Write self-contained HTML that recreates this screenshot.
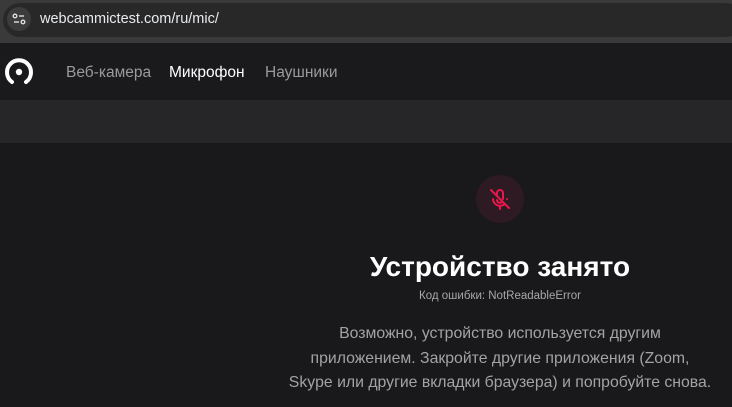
<!DOCTYPE html>
<html><head><meta charset="utf-8"><style>
*{margin:0;padding:0;box-sizing:border-box}
body{width:732px;height:407px;overflow:hidden;background:#19191b;font-family:"Liberation Sans",sans-serif;position:relative}
.top{position:absolute;left:0;top:0;width:732px;height:43px;background:#3a3a3a}
.pill{position:absolute;left:3px;top:3px;width:740px;height:34px;border-radius:17px;background:#282828}
.ic{position:absolute;left:7px;top:7px;width:24px;height:24px;border-radius:12px;background:#3c3c3c}
.url{position:absolute;left:40px;top:11px;font-size:14.5px;color:#e8eaed}
.nav{position:absolute;left:0;top:43px;width:732px;height:57px;background:#1a1a1c}
.nav span{position:absolute;top:21px;font-size:15.5px;color:#9a9a9a}
.band{position:absolute;left:0;top:100px;width:732px;height:43px;background:#262628}
.circ{position:absolute;left:476px;top:175px;width:48px;height:48px;border-radius:24px;background:#2e1a22}
h1{position:absolute;left:300px;width:400px;top:251px;text-align:center;font-size:28px;color:#fff;font-weight:bold}
.code{position:absolute;left:300px;width:400px;top:290px;text-align:center;font-size:11.5px;color:#a8a8a8}
.p{position:absolute;left:270px;width:460px;top:322px;text-align:center;font-size:15.8px;line-height:24.5px;color:#a3a3a3}
</style></head><body>
<div class="top"><div class="pill"></div><div class="ic">
<svg width="24" height="24" viewBox="0 0 24 24" fill="none" stroke="#e0e0e0" stroke-width="1.4"><circle cx="8" cy="9" r="1.8"/><line x1="12" y1="9" x2="17" y2="9"/><line x1="7" y1="15" x2="12" y2="15"/><circle cx="16" cy="15" r="1.8"/></svg></div>
<div class="url">webcammictest.com/ru/mic/</div></div>
<div class="nav">
<svg style="position:absolute;left:4px;top:14px" width="30" height="30" viewBox="0 0 30 30"><path d="M8 25 A12 12 0 1 1 22 25" fill="none" stroke="#fff" stroke-width="4" stroke-linecap="round"/><circle cx="15" cy="15" r="3.2" fill="#fff"/></svg>
<span style="left:66px">Веб-камера</span><span style="left:169px;color:#fff">Микрофон</span><span style="left:265px">Наушники</span></div>
<div class="band"></div>
<div class="circ"><svg width="48" height="48" viewBox="0 0 48 48" fill="none" stroke="#e8174c" stroke-width="2" stroke-linecap="round"><path d="M21 20v-2a3 3 0 0 1 6 0v6"/><path d="M26 27a3 3 0 0 1-5-2"/><path d="M17 24a7 7 0 0 0 11 5.5M31 24v0"/><line x1="24" y1="31" x2="24" y2="34"/><line x1="15" y1="15" x2="33" y2="33"/></svg></div>
<h1>Устройство занято</h1>
<div class="code">Код ошибки: NotReadableError</div>
<div class="p">Возможно, устройство используется другим<br>приложением. Закройте другие приложения (Zoom,<br>Skype или другие вкладки браузера) и попробуйте снова.</div>
</body></html>
